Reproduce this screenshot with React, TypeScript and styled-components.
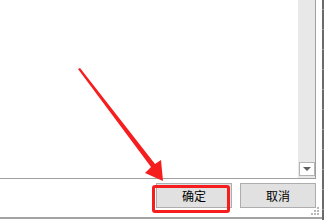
import React from "react";
import styled, { createGlobalStyle } from "styled-components";

const Global = createGlobalStyle`
  html, body { margin: 0; padding: 0; background: #ffffff; }
  body { font-family: "Noto Sans CJK SC", "Noto Sans", sans-serif; }
`;

const Page = styled.div`
  position: relative;
  width: 324px;
  height: 220px;
  overflow: hidden;
  display: flex;
  align-items: flex-start;
  background: #ffffff;
`;

const Dialog = styled.div`
  width: 322px;
  height: 219px;
  box-sizing: border-box;
  border-bottom: 2px solid #a3a3a3;
  display: flex;
  flex-direction: column;
  background: #ffffff;
`;

const EdgeStrip = styled.div`
  width: 2px;
  height: 220px;
  background: repeating-linear-gradient(
    to bottom,
    #6a6a6a 0px,
    #6a6a6a 9px,
    #9a9a9a 9px,
    #9a9a9a 10px,
    #6a6a6a 10px,
    #6a6a6a 20px
  );
`;

const ListBox = styled.div`
  margin: -1px 0 0 -1px;
  width: 317px;
  height: 180px;
  box-sizing: border-box;
  border: 1px solid #a0a0a0;
  display: flex;
  background: #ffffff;
`;

const ListContent = styled.div`
  flex: 1;
  background: #ffffff;
`;

const Scrollbar = styled.div`
  width: 17px;
  background: #e8e8e8;
  display: flex;
  flex-direction: column;
  justify-content: flex-end;
  align-items: flex-end;
  padding-bottom: 2px;
  box-sizing: border-box;
`;

const ScrollButton = styled.div`
  width: 16px;
  height: 14px;
  box-sizing: border-box;
  border: 1px solid #b4b4b4;
  background: #ffffff;
  display: flex;
  align-items: center;
  justify-content: center;
`;

const ButtonRow = styled.div`
  display: flex;
  justify-content: flex-end;
  gap: 8px;
  padding: 4px 6px 0 0;
`;

const Button = styled.div`
  width: 76px;
  height: 25px;
  box-sizing: border-box;
  border: 1px solid #adadad;
  background: #e1e1e1;
  color: #000000;
  font-family: "Noto Sans CJK SC", "Noto Sans", sans-serif;
  font-size: 12px;
  display: flex;
  align-items: center;
  justify-content: center;
  line-height: 1;
`;

const Highlight = styled.div`
  position: absolute;
  left: 152px;
  top: 185px;
  width: 78px;
  height: 28px;
  box-sizing: border-box;
  border: 3px solid #f51d1d;
  border-radius: 3px;
  pointer-events: none;
`;

const Overlay = styled.svg`
  position: absolute;
  left: 0;
  top: 0;
  width: 324px;
  height: 220px;
  pointer-events: none;
`;

const Grip = styled.svg`
  position: absolute;
  right: 4px;
  bottom: 4px;
  width: 9px;
  height: 9px;
`;

export default function App() {
  const dots = [
    [6, 0],
    [3, 3],
    [6, 3],
    [0, 6],
    [3, 6],
    [6, 6],
  ];
  return (
    <>
      <Global />
      <Page>
        <Dialog>
          <ListBox>
            <ListContent />
            <Scrollbar>
              <ScrollButton>
                <svg width="8" height="5" viewBox="0 0 8 5">
                  <polygon points="0,0 8,0 4,4" fill="#5f5f5f" />
                </svg>
              </ScrollButton>
            </Scrollbar>
          </ListBox>
          <ButtonRow>
            <Button>确定</Button>
            <Button>取消</Button>
          </ButtonRow>
        </Dialog>
        <EdgeStrip />
        <Grip viewBox="0 0 9 9">
          {dots.map(([x, y], i) => (
            <rect key={i} x={x} y={y} width="2" height="2" fill="#b8b8b8" />
          ))}
        </Grip>
        <Highlight />
        <Overlay viewBox="0 0 324 220">
          <polygon
            points="78,69 80,68 155,164 161,160 163,181 145,173 151,167"
            fill="#f51d1d"
          />
        </Overlay>
      </Page>
    </>
  );
}
